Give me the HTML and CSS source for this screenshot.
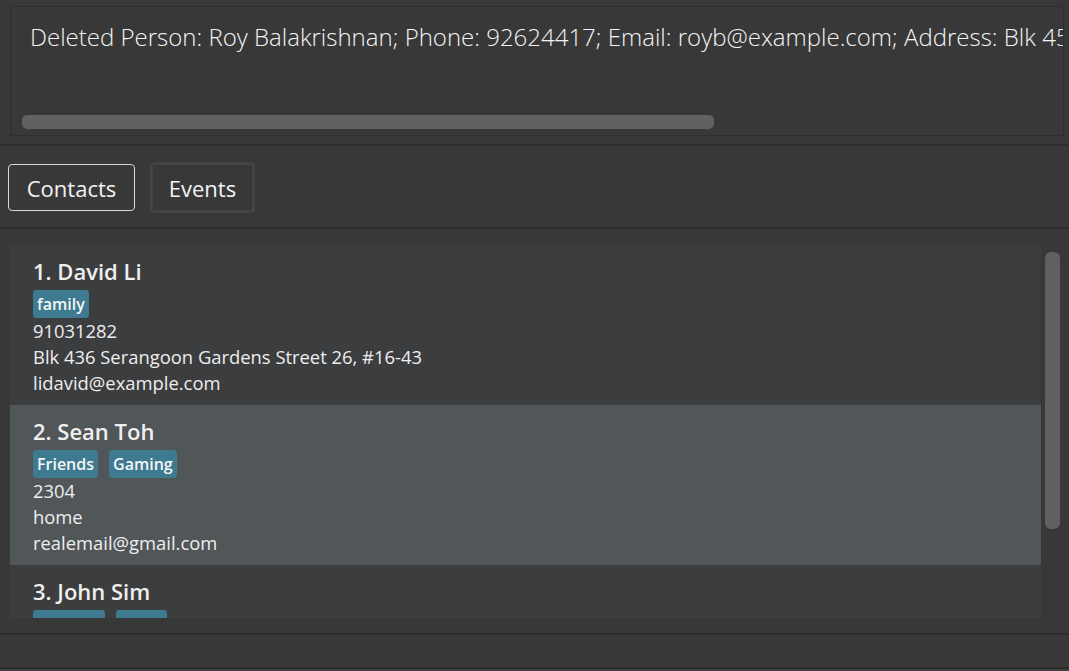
FILE: index.html
```html
<!DOCTYPE html>
<html lang="en">
<head>
<meta charset="utf-8">
<title>Address Book</title>
<link rel="stylesheet" href="styles.css">
</head>
<body>
<div class="app">
  <section class="result-pane">
    <div class="result-box">
      <div class="result-text">Deleted Person: Roy Balakrishnan; Phone: 92624417; Email: royb@example.com; Address: Blk 45 Aljunied Street 85, #11-31; Tags: [colleagues]</div>
      <div class="hscroll"><div class="hthumb"></div></div>
    </div>
  </section>
  <nav class="tabs">
    <button class="tab tab-active">Contacts</button>
    <button class="tab tab-idle">Events</button>
  </nav>
  <section class="list-pane">
    <div class="list">
      <div class="card">
        <div class="name">1. David Li</div>
        <div class="tags"><span class="tag">family</span></div>
        <div class="field">91031282</div>
        <div class="field">Blk 436 Serangoon Gardens Street 26, #16-43</div>
        <div class="field">lidavid@example.com</div>
      </div>
      <div class="card selected">
        <div class="name">2. Sean Toh</div>
        <div class="tags"><span class="tag">Friends</span><span class="tag">Gaming</span></div>
        <div class="field">2304</div>
        <div class="field">home</div>
        <div class="field">realemail@gmail.com</div>
      </div>
      <div class="card">
        <div class="name">3. John Sim</div>
        <div class="tags"><span class="tag">Running</span><span class="tag">study</span></div>
        <div class="field">98765432</div>
        <div class="field">Blk 30 Geylang Street 29, #06-40</div>
        <div class="field">johnsim@example.com</div>
      </div>
    </div>
    <div class="vscroll"><div class="vthumb"></div></div>
  </section>
  <footer class="status"></footer>
  <div class="bottom-strip"></div>
</div>
</body>
</html>
```
FILE: styles.css
```css
html, body {
  margin: 0;
  padding: 0;
  background: #383838;
  height: 100%;
  overflow: hidden;
}
.app {
  width: 1069px;
  height: 671px;
  display: flex;
  flex-direction: column;
  font-family: "Open Sans", "Noto Sans", sans-serif;
  color: #f2f2f2;
}
.result-pane {
  padding: 6px 5px 8px 10px;
  border-bottom: 2px solid #2d2d2d;
}
.result-box {
  height: 130px;
  box-sizing: border-box;
  border: 1px solid #2e2e2e;
  background: #383838;
  display: flex;
  flex-direction: column;
  justify-content: space-between;
  overflow: hidden;
}
.result-text {
  font-weight: 300;
  font-size: 24px;
  white-space: nowrap;
  padding: 14px 0 0 19px;
  line-height: 32px;
  color: #f4f4f4;
}
.hscroll {
  padding: 0 11px 6px 11px;
}
.hthumb {
  width: 692px;
  height: 14px;
  border-radius: 5px;
  background: #616161;
}
.tabs {
  display: flex;
  align-items: center;
  gap: 15px;
  padding: 16px 0 14px 8px;
  border-bottom: 2px solid #2d2d2d;
}
.tab {
  font-family: inherit;
  font-size: 22px;
  color: #f4f4f4;
  background: #383838;
  border-radius: 4px;
  cursor: pointer;
  padding: 0;
}
.tab-active {
  border: 1.5px solid #d8d8d8;
  width: 127px;
  height: 47px;
}
.tab-idle {
  border: 3px solid #444444;
  width: 105px;
  height: 51px;
}
.list-pane {
  display: flex;
  padding: 16px 0 15px 10px;
  border-bottom: 2px solid #2c2c2c;
  height: 373px;
  box-sizing: content-box;
}
.list {
  width: 1031px;
  height: 373px;
  overflow: hidden;
}
.card {
  height: 160px;
  box-sizing: border-box;
  background: #3c3d3f;
  padding: 11px 0 0 23px;
}
.card.selected {
  background: #515658;
}
.name {
  font-size: 22px;
  font-weight: 600;
  line-height: 30px;
  color: #efefef;
}
.tags {
  display: flex;
  gap: 11px;
  margin: 4px 0 0 0;
}
.tag {
  background: #3e7a90;
  color: #f6f6f6;
  font-size: 16px;
  font-weight: 600;
  line-height: 28px;
  padding: 0 4px;
  border-radius: 3px;
}
.field {
  font-size: 18.4px;
  line-height: 26px;
  color: #eeeeee;
}
.vscroll {
  width: 28px;
  padding: 7px 0 0 4px;
  box-sizing: border-box;
}
.vthumb {
  width: 15px;
  height: 277px;
  border-radius: 6px;
  background: #606060;
}
.status {
  height: 32px;
  border-bottom: 2px solid #2c2c2c;
}
.bottom-strip {
  flex: 1;
  background: #3e3e3e;
}
```
